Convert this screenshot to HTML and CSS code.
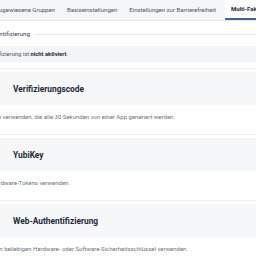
FILE: index.html
```html
<!doctype html>
<html lang="de">
<head>
  <meta charset="utf-8">
  <title>Multi-Faktor-Authentifizierung</title>
  <link rel="stylesheet" href="styles.css">
</head>
<body>
  <div class="page">
    <div class="tabs">
      <div class="tab tab-cut"><span>Zugewiesene Gruppen</span></div>
      <div class="tab">Basiseinstellungen</div>
      <div class="tab">Einstellungen zur Barrierefreiheit</div>
      <div class="tab active">Multi-Faktor-Authentifizierung</div>
    </div>
    <div class="legend">
      <span class="cut legend-text"><span>Multi-Faktor-Authentifizierung</span></span>
    </div>
    <div class="notice">
      <span class="cut notice-text"><span>Multi-Faktor-Authentifizierung ist <b>nicht aktiviert</b>.</span></span>
    </div>
    <div class="method">
      <div class="method-head">
        <h3>Verifizierungscode</h3>
      </div>
      <p class="cut method-desc desc-code"><span>Zeitbasierte Einmal-Token verwenden, die alle 30 Sekunden von einer App generiert werden.</span></p>
    </div>
    <div class="method">
      <div class="method-head">
        <h3>YubiKey</h3>
      </div>
      <p class="cut method-desc desc-key"><span>Einen YubiKey oder andere Hardware-Tokens verwenden.</span></p>
    </div>
    <div class="method">
      <div class="method-head">
        <h3>Web-Authentifizierung</h3>
      </div>
      <p class="cut method-desc desc-web"><span>Einen beliebigen Hardware- oder Software-Sicherheitsschlüssel verwenden.</span></p>
    </div>
  </div>
</body>
</html>
```

FILE: styles.css
```css
body {
  margin: 0;
  font-family: Roboto, "Noto Sans", sans-serif;
  color: #4b5563;
  overflow: hidden;
}

/* the page is scrolled sideways: these texts end at a fixed x and spill off to the left */
.cut {
  display: flex;
  justify-content: flex-end;
  white-space: nowrap;
  flex: none;
}

.tabs {
  display: flex;
  height: 20px;
  background: #f5f6f8;
  border-bottom: 1px solid #e5e7eb;
}

.tab {
  font-size: 6px;
  line-height: 20px;
  padding: 0 6px;
  white-space: nowrap;
  color: #4b5563;
}

.tab-cut {
  display: flex;
  justify-content: flex-end;
  flex: none;
  width: 55px;
  padding: 0 6px 0 0;
}

.active {
  flex: 1;
  background: #fff;
  color: #1e293b;
  font-weight: 700;
  border-bottom: 2px solid #44628f;
  line-height: 18px;
  margin-left: 3px;
}

.legend {
  display: flex;
  align-items: center;
  margin-top: 7px;
  height: 12px;
  font-size: 6.2px;
  color: #374151;
}

.legend-text {
  width: 30px;
}

.legend::after {
  content: "";
  flex: 1;
  border-top: 1px solid #e5e7eb;
  margin-left: 4px;
}

.notice {
  margin-top: 6px;
  background: #f3f4f6;
  font-size: 5.8px;
  line-height: 16px;
}

.notice-text {
  width: 68px;
}

.notice b {
  color: #1f2937;
}

.method {
  margin-top: 6px;
  border-top: 1px solid #eceef1;
}

.method-head {
  background: #f6f7f9;
  height: 33px;
  margin-top: 3px;
  display: flex;
  align-items: center;
  padding-left: 13px;
}

.method-head h3 {
  margin: 0;
  font-size: 8.4px;
  color: #1e293b;
}

.method-desc {
  margin: 0;
  padding: 8px 0;
  font-size: 6px;
  line-height: 7px;
  color: #6b7280;
}

.desc-code {
  width: 175px;
}

.desc-key {
  width: 70px;
}

.desc-web {
  width: 188px;
}
```
